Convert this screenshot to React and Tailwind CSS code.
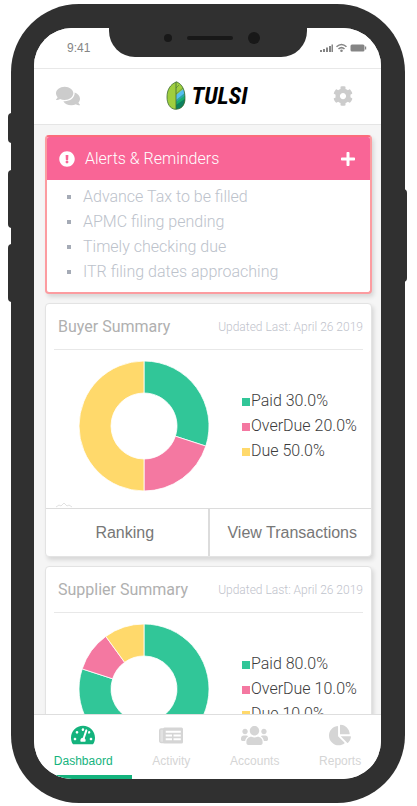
import React from 'react';
import { FaComments, FaCog, FaExclamationCircle, FaPlus, FaTachometerAlt, FaUsers, FaChartPie } from 'react-icons/fa';

const COLORS = { Paid: '#31c698', OverDue: '#f478a1', Due: '#ffd96b' };

const ALERTS = [
  'Advance Tax to be filled',
  'APMC filing pending',
  'Timely checking due',
  'ITR filing dates approaching',
];

const BUYER = [
  { label: 'Paid', value: 30 },
  { label: 'OverDue', value: 20 },
  { label: 'Due', value: 50 },
];

const SUPPLIER = [
  { label: 'Paid', value: 80 },
  { label: 'OverDue', value: 10 },
  { label: 'Due', value: 10 },
];

function point(radius, fraction) {
  const angle = fraction * Math.PI * 2;
  return `${65 + radius * Math.sin(angle)} ${65 - radius * Math.cos(angle)}`;
}

function Donut({ data, title }) {
  let start = 0;
  return (
    <svg viewBox="0 0 130 130" className="size-[130px] shrink-0" role="img" aria-label={title}>
      {data.map(({ label, value }) => {
        const from = start;
        const to = start + value / 100;
        start = to;
        const large = value > 50 ? 1 : 0;
        return (
          <path
            key={label}
            d={`M${point(65, from)}A65 65 0 ${large} 1 ${point(65, to)}L${point(33, to)}A33 33 0 ${large} 0 ${point(33, from)}Z`}
            fill={COLORS[label]}
            stroke="#fff"
            strokeWidth="0.8"
          />
        );
      })}
    </svg>
  );
}

function SummaryCard({ title, data }) {
  return (
    <section className="shrink-0 overflow-hidden rounded border border-[#e3e3e3] bg-white shadow-[2px_3px_4px_rgba(0,0,0,0.12)]">
      <header className="mx-2 flex h-[46px] items-center justify-between border-b border-[#e8e8e8] pl-1">
        <h2 className="text-base text-[#b0b0b0]">{title}</h2>
        <p className="text-xs font-light text-[#bfc3cc]">Updated Last: April 26 2019</p>
      </header>
      <div className="relative flex h-[158px] justify-between overflow-hidden pt-[11px] pr-[14px] pl-[33px]">
        <Donut data={data} title={title} />
        <ul className="flex w-[115px] flex-col pt-[27px]">
          {data.map(({ label, value }) => (
            <li key={label} className="flex h-[25px] items-center gap-px text-base font-light whitespace-nowrap text-[#3c3c3c]">
              <span className="mt-0.5 size-2 shrink-0" style={{ backgroundColor: COLORS[label] }} />
              {label} {value.toFixed(1)}%
            </li>
          ))}
        </ul>
        <svg viewBox="0 0 18 6" className="absolute bottom-0 left-[9px] h-1.5 w-[18px]" fill="none" stroke="#e2e2e2" aria-hidden="true">
          <path d="M1 5L4 3L6 4L9 1L12 4L14 3L17 5" />
        </svg>
      </div>
      <div className="flex h-12 border-t border-[#dcdcdc] font-[family-name:'Liberation_Sans',Arial,sans-serif] text-base text-[#777]">
        <button type="button" className="flex-1 pr-1">Ranking</button>
        <button type="button" className="flex-1 border-l-2 border-[#dcdcdc] pl-1 whitespace-nowrap">View Transactions</button>
      </div>
    </section>
  );
}

function ActivityIcon() {
  return (
    <svg viewBox="0 0 24 17" className="h-[17px] w-6" aria-hidden="true">
      <rect x="0.7" y="2" width="5" height="13.500" rx="1.5" fill="currentColor" fillOpacity="0.7" stroke="currentColor" strokeWidth="1.4" />
      <path fill="currentColor" fillRule="evenodd" d="M5.500 0.500H22.500Q24 0.500 24 2V15Q24 16.500 22.500 16.500H5.500Q4 16.500 4 15V2Q4 0.500 5.500 0.500ZM6.500 3.800V5.800H21.800V3.800ZM6.500 7.500V9.500H13V7.500ZM14.500 7.500V9.500H21.800V7.500ZM6.500 11.200V13.200H13V11.200ZM14.500 11.200V13.200H21.800V11.200Z" />
    </svg>
  );
}

function LeafLogo() {
  return (
    <svg viewBox="0 0 20 29" className="h-[29px] w-5" aria-hidden="true">
      <defs>
        <clipPath id="leaf">
          <path d="M10.500 0.800C4 3.500 1 9 1 16C1 23 4 27.500 9 28.300C15 28.500 19 24.500 19 17.500C19 10 17 3.500 10.500 0.800Z" />
        </clipPath>
      </defs>
      <g clipPath="url(#leaf)">
        <path d="M0 0H20V29H0Z" fill="#9fce3f" />
        <path d="M10 14L20 6V12L10 19Z" fill="#55bdf0" />
        <path d="M10 19L20 11V15L10 22Z" fill="#2ba5a5" />
        <path d="M10 21L20 14V19L10 25Z" fill="#16ad6d" />
        <path d="M10 24L20 17V29H10Z" fill="#0d8060" />
      </g>
      <path d="M10.500 0.800C4 3.500 1 9 1 16C1 23 4 27.500 9 28.300C15 28.500 19 24.500 19 17.500C19 10 17 3.500 10.500 0.800ZM10 1V28" fill="none" stroke="#3c6b35" strokeWidth="0.8" />
      <path d="M10 7L13 4M10 13L17 7" fill="none" stroke="#3c6b35" strokeWidth="0.5" />
    </svg>
  );
}

function StatusIcons() {
  return (
    <svg viewBox="0 0 48 10" className="h-2.5 w-12" fill="#858585" aria-label="Signal, wifi and battery" role="img">
      <path d="M1 7H3V9H1ZM4 6H6V9H4ZM7 4.500H9V9H7ZM10 3H12V9H10ZM12.500 1.500H14V9H12.500Z" />
      <g fill="none" stroke="#858585" strokeWidth="1.500">
        <path d="M17.500 3.800Q22.500 -0.800 27.500 3.800M19.500 6Q22.500 3.200 25.500 6" />
      </g>
      <circle cx="22.500" cy="7.800" r="1.300" />
      <rect x="31.500" y="1.500" width="14" height="7" rx="1.500" />
      <rect x="46" y="3.500" width="1.200" height="3" />
    </svg>
  );
}

const TABS = [
  { label: 'Dashbaord', icon: <FaTachometerAlt className="size-6" />, active: true },
  { label: 'Activity', icon: <ActivityIcon /> },
  { label: 'Accounts', icon: <FaUsers className="size-[27px]" /> },
  { label: 'Reports', icon: <FaChartPie className="size-[22px]" /> },
];

export default function App() {
  return (
    <div className="h-screen bg-white pt-1 pr-3 pb-[3px] pl-[11px] font-[family-name:Roboto,sans-serif]">
      <div className="relative h-full rounded-[68px] bg-[#303030] py-6 pr-6 pl-[23px]">
        <span className="absolute top-[109px] -left-[3px] h-[30px] w-1 rounded-l-sm bg-[#303030]" />
        <span className="absolute top-[166px] -left-[3px] h-[58px] w-1 rounded-l-sm bg-[#303030]" />
        <span className="absolute top-[240px] -left-[3px] h-[58px] w-1 rounded-l-sm bg-[#303030]" />
        <span className="absolute top-[185px] -right-[2px] h-[93px] w-1 rounded-r-sm bg-[#303030]" />

        <div className="relative flex h-full flex-col overflow-hidden rounded-[38px] bg-[#f5f5f5]">
          <div className="flex h-[41px] shrink-0 items-center justify-between border-b border-[#e8e8e8] bg-white pr-[14px] pl-[33px]">
            <span className="font-[family-name:'Liberation_Sans',Arial,sans-serif] text-xs text-[#858585]">9:41</span>
            <StatusIcons />
          </div>
          <div className="absolute top-0 left-1/2 flex h-[29px] w-[198px] -translate-x-1/2 justify-center gap-[15px] rounded-b-[26px] bg-[#303030] pt-1 pl-2">
            <span className="mt-0.5 size-2 rounded-full bg-[#181818]" />
            <span className="mt-1 h-1 w-[46px] rounded-full bg-[#181818]" />
            <span className="size-3 rounded-full bg-[#181818]" />
          </div>

          <header className="flex h-14 shrink-0 items-center justify-between border-b border-[#e5e5e5] bg-white px-[22px] pb-0.5 text-[#ccc]">
            <button type="button" aria-label="Messages"><FaComments className="size-6" /></button>
            <h1 className="flex items-center gap-1.5 font-[family-name:'Liberation_Sans_Narrow','Roboto_Condensed',Roboto,sans-serif] text-2xl leading-none font-bold text-black italic">
              <LeafLogo />
              TULSI
            </h1>
            <button type="button" aria-label="Settings" className="pr-1.5"><FaCog className="size-5" /></button>
          </header>

          <main className="flex min-h-0 flex-1 flex-col gap-[9px] overflow-y-auto pt-2.5 pr-[9px] pl-[11px] [scrollbar-width:none]">
            <section className="shrink-0 overflow-hidden rounded border-2 border-[#fc9ca0] border-t-[#fb6c7c] bg-white shadow-[2px_3px_4px_rgba(0,0,0,0.12)]">
              <header className="flex h-[43px] items-center bg-[#f96596] pr-3.5 pl-3 text-white">
                <FaExclamationCircle className="size-4" />
                <h2 className="ml-2.5 flex-1 text-base font-light">Alerts &amp; Reminders</h2>
                <button type="button" aria-label="Add reminder"><FaPlus className="size-4" /></button>
              </header>
              <ul className="pt-1 pb-2 pl-5">
                {ALERTS.map((text) => (
                  <li key={text} className="flex h-[25px] items-center gap-3 text-base font-light text-[#bcc2cb]">
                    <span className="size-1 bg-[#a5abb6]" />
                    {text}
                  </li>
                ))}
              </ul>
            </section>
            <SummaryCard title="Buyer Summary" data={BUYER} />
            <SummaryCard title="Supplier Summary" data={SUPPLIER} />
          </main>

          <nav className="flex h-[65px] shrink-0 border-t border-[#dedede] bg-white font-[family-name:'Liberation_Sans',Arial,sans-serif] text-xs">
            {TABS.map(({ label, icon, active }) => (
              <button
                key={label}
                type="button"
                className={`flex flex-auto flex-col items-center border-b-4 pt-2 ${active ? 'border-[#14b37d] text-[#14b37d]' : 'border-transparent text-[#d5d5d5]'}`}
              >
                <span className="flex h-6 items-center">{icon}</span>
                <span className="mt-1.5 leading-4">{label}</span>
              </button>
            ))}
          </nav>
        </div>
      </div>
    </div>
  );
}
